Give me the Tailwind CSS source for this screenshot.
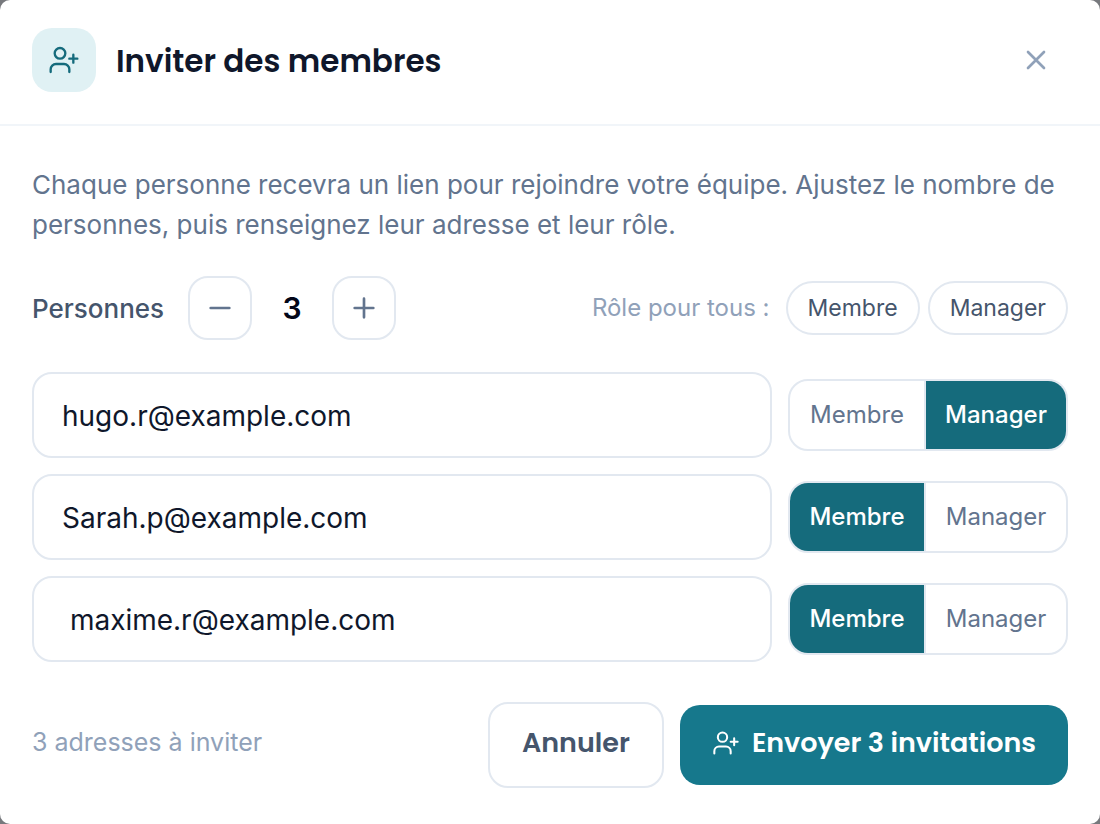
<!DOCTYPE html>
<html lang="fr">
  <head>
    <meta charset="UTF-8" />
    <title>Inviter des membres</title>
    <meta name="viewport" content="width=device-width, initial-scale=1.0" />
    <script src="https://cdn.jsdelivr.net/npm/@tailwindcss/browser@4"></script>
  </head>
  <body class="min-h-screen bg-[#77797d] font-['Inter',sans-serif]">
    <div role="dialog" aria-labelledby="dialog-title" class="flex min-h-screen flex-col rounded-[10px] bg-white">
      <!-- En-tête -->
      <header class="flex items-center gap-5 border-b-2 border-slate-100 px-8 pt-7 pb-8">
        <div class="flex size-16 shrink-0 items-center justify-center rounded-[20px] bg-[#e0f1f4] text-[#156b7c]">
          <svg class="size-8" viewBox="0 0 24 24" fill="none" stroke="currentColor" stroke-width="1.75" stroke-linecap="round" stroke-linejoin="round" aria-hidden="true">
            <path d="M16 21v-2a4 4 0 0 0-4-4H6a4 4 0 0 0-4 4v2" />
            <circle cx="9" cy="7" r="4" />
            <path d="M19 8v6M22 11h-6" />
          </svg>
        </div>
        <h1 id="dialog-title" class="flex-1 pt-0.5 font-['Poppins','Inter',sans-serif] text-[31px] leading-10 font-semibold text-slate-900">Inviter des membres</h1>
        <button type="button" aria-label="Fermer" class="flex size-16 items-center justify-center rounded-[20px] text-slate-400">
          <svg class="size-8" viewBox="0 0 24 24" fill="none" stroke="currentColor" stroke-width="2" stroke-linecap="round" aria-hidden="true">
            <path d="M18 6L6 18M6 6l12 12" />
          </svg>
        </button>
      </header>

      <form class="flex flex-1 flex-col px-8 pt-[39px] pb-9">
        <p class="text-[26px] leading-10 text-slate-500">Chaque personne recevra un lien pour rejoindre votre équipe. Ajustez le nombre de personnes, puis renseignez leur adresse et leur rôle.</p>

        <!-- Nombre de personnes et rôle commun -->
        <div class="mt-[31px] flex items-center justify-between">
          <div class="flex items-center">
            <span class="mr-6 text-[26px] font-medium text-slate-600">Personnes</span>
            <button type="button" aria-label="Retirer une personne" class="flex size-16 items-center justify-center rounded-[20px] border-2 border-slate-200 text-slate-500">
              <svg class="size-8" viewBox="0 0 24 24" fill="none" stroke="currentColor" stroke-width="2" stroke-linecap="round" aria-hidden="true">
                <path d="M5 12h14" />
              </svg>
            </button>
            <output class="w-20 text-center text-[30px] font-semibold text-slate-950">3</output>
            <button type="button" aria-label="Ajouter une personne" class="flex size-16 items-center justify-center rounded-[20px] border-2 border-slate-200 text-slate-500">
              <svg class="size-8" viewBox="0 0 24 24" fill="none" stroke="currentColor" stroke-width="2" stroke-linecap="round" aria-hidden="true">
                <path d="M5 12h14M12 5v14" />
              </svg>
            </button>
          </div>
          <div class="flex items-center gap-2 text-[23px]">
            <span class="mr-2 text-2xl text-slate-400">Rôle pour tous :</span>
            <button type="button" class="rounded-full border-2 border-slate-200 px-5 py-2 leading-[34px] text-slate-600">Membre</button>
            <button type="button" class="rounded-full border-2 border-slate-200 px-5 py-2 leading-[34px] text-slate-600">Manager</button>
          </div>
        </div>

        <!-- Adresses -->
        <div class="mt-8 flex flex-col gap-4">
          <div class="flex items-center gap-4">
            <input type="text" inputmode="email" aria-label="Adresse 1" value="hugo.r@example.com" class="h-[86px] min-w-0 flex-1 rounded-[20px] border-2 border-slate-200 px-7 pt-1 pb-0.5 text-[28px] text-slate-900" />
            <div role="group" aria-label="Rôle 1" class="grid h-[72px] w-[280px] grid-cols-[134px_1fr] overflow-hidden rounded-[20px] border-2 border-slate-200 text-2xl">
              <button type="button" aria-pressed="false" class="text-slate-500">Membre</button>
              <button type="button" aria-pressed="true" class="border-l-2 border-slate-200 bg-[#156b7c] bg-clip-padding font-medium text-white">Manager</button>
            </div>
          </div>
          <div class="flex items-center gap-4">
            <input type="text" inputmode="email" aria-label="Adresse 2" value="Sarah.p@example.com" class="h-[86px] min-w-0 flex-1 rounded-[20px] border-2 border-slate-200 px-7 pt-1 pb-0.5 text-[28px] text-slate-900" />
            <div role="group" aria-label="Rôle 2" class="grid h-[72px] w-[280px] grid-cols-[134px_1fr] overflow-hidden rounded-[20px] border-2 border-slate-200 text-2xl">
              <button type="button" aria-pressed="true" class="bg-[#156b7c] font-medium text-white">Membre</button>
              <button type="button" aria-pressed="false" class="border-l-2 border-slate-200 text-slate-500">Manager</button>
            </div>
          </div>
          <div class="flex items-center gap-4">
            <input type="text" inputmode="email" aria-label="Adresse 3" value=" maxime.r@example.com" class="h-[86px] min-w-0 flex-1 rounded-[20px] border-2 border-slate-200 px-7 pt-1 pb-0.5 text-[28px] text-slate-900" />
            <div role="group" aria-label="Rôle 3" class="grid h-[72px] w-[280px] grid-cols-[134px_1fr] overflow-hidden rounded-[20px] border-2 border-slate-200 text-2xl">
              <button type="button" aria-pressed="true" class="bg-[#156b7c] font-medium text-white">Membre</button>
              <button type="button" aria-pressed="false" class="border-l-2 border-slate-200 text-slate-500">Manager</button>
            </div>
          </div>
        </div>

        <!-- Actions -->
        <div class="mt-10 flex items-center gap-4">
          <p class="flex-1 pb-1 text-[25px] text-slate-400">3 adresses à inviter</p>
          <button type="button" class="h-[86px] rounded-[20px] border-2 border-slate-200 px-8 pb-1 font-['Poppins','Inter',sans-serif] text-[27px] font-semibold text-slate-600">Annuler</button>
          <button type="submit" class="flex h-20 items-center gap-3 rounded-[20px] bg-[#16788c] px-8 pb-1 font-['Poppins','Inter',sans-serif] text-[27px] font-semibold text-white">
            <svg class="size-7" viewBox="0 0 24 24" fill="none" stroke="currentColor" stroke-width="1.75" stroke-linecap="round" stroke-linejoin="round" aria-hidden="true">
              <path d="M16 21v-2a4 4 0 0 0-4-4H6a4 4 0 0 0-4 4v2" />
              <circle cx="9" cy="7" r="4" />
              <path d="M19 8v6M22 11h-6" />
            </svg>
            Envoyer 3 invitations
          </button>
        </div>
      </form>
    </div>
  </body>
</html>
